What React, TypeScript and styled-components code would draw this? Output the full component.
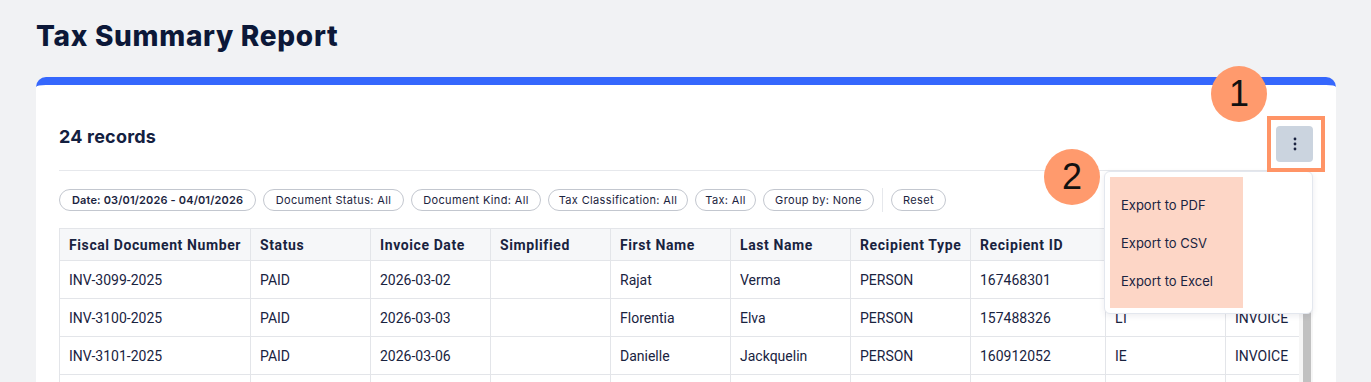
import * as React from "react"
import styled, { createGlobalStyle } from "styled-components"

const GlobalStyle = createGlobalStyle`
  body {
    margin: 0;
    background: #f1f2f4;
    font-family: Inter, "Noto Sans", sans-serif;
    color: #0e1a3d;
  }
`

const Page = styled.div`
  padding: 18px 35px 0 36px;
`

const Title = styled.h1`
  margin: 0 0 23px;
  font-size: 28px;
  line-height: 36px;
  font-weight: 800;
  letter-spacing: 0.7px;
  color: #0c1838;
`

const Card = styled.section`
  position: relative;
  background: #fff;
  border-top: 8px solid #3567fd;
  border-radius: 10px 10px 0 0;
  padding: 0 23px 20px;
`

const CardHeader = styled.div`
  display: flex;
  justify-content: space-between;
  align-items: flex-start;
  padding: 41px 0 8px;
  border-bottom: 1px solid #e6e8ec;
`

const Records = styled.h2`
  margin: 0;
  font-size: 18px;
  line-height: 22px;
  font-weight: 700;
  letter-spacing: 0.2px;
  color: #13203f;
`

const KebabButton = styled.button`
  display: flex;
  align-items: center;
  justify-content: center;
  width: 37px;
  height: 36px;
  padding: 0;
  border: none;
  border-radius: 4px;
  background: #cbd4df;
  color: #1a2340;
`

const Filters = styled.div`
  display: flex;
  align-items: center;
  gap: 7px;
  padding: 17px 0 16px;
`

const Chip = styled.button<{ $strong?: boolean; $w: number }>`
  width: ${(p) => p.$w}px;
  height: 22px;
  padding: 0;
  border: 1px solid #c3c7cf;
  border-radius: 11px;
  background: #fff;
  font-family: Inter, "Noto Sans", sans-serif;
  font-size: 11px;
  font-weight: ${(p) => (p.$strong ? 600 : 400)};
  letter-spacing: ${(p) => (p.$strong ? 0.15 : 0.35)}px;
  color: #1b2440;
  white-space: nowrap;
  text-align: center;
`

const Divider = styled.span`
  width: 1px;
  height: 24px;
  margin: 0 1px;
  background: #e6e8ec;
`

const TableArea = styled.div`
  display: flex;
  height: 300px;
`

const TableViewport = styled.div`
  flex: 1;
  min-width: 0;
  overflow: hidden;
`

const ScrollTrack = styled.div`
  width: 14px;
  flex-shrink: 0;
  padding: 40px 2px 0 4px;
  box-sizing: border-box;
  background: #f6f6f6;
`

const ScrollThumb = styled.div`
  height: 200px;
  background: #c1c1c1;
`

const Table = styled.table<{ $w: number }>`
  width: ${(p) => p.$w}px;
  border-collapse: collapse;
  table-layout: fixed;
  font-family: Roboto, "Liberation Sans", sans-serif;
  font-size: 14px;
  color: #19233f;
`

const Th = styled.th`
  height: 31px;
  padding: 0 9px;
  text-align: left;
  font-weight: 700;
  letter-spacing: 0.6px;
  background: #f6f7f9;
  border: 1px solid #e3e5e9;
  white-space: nowrap;
  overflow: hidden;
`

const Td = styled.td`
  height: 37px;
  padding: 0 9px;
  border: 1px solid #e3e5e9;
  white-space: nowrap;
  overflow: hidden;
`

const Menu = styled.div`
  position: absolute;
  top: 86px;
  right: 23px;
  width: 197px;
  padding: 5px;
  background: #fff;
  border: 1px solid #e3e7ee;
  border-radius: 6px;
  box-shadow: 0 2px 6px rgba(20, 30, 60, 0.08);
  z-index: 3;
`

const MenuList = styled.ul`
  list-style: none;
  margin: 0;
  width: 133px;
  padding: 9px 0 8px;
  background: #fdd6c6;
`

const MenuItem = styled.li`
  height: 38px;
  line-height: 38px;
  padding: 0 11px;
  font-size: 13px;
  color: #1a2340;
`

const Badge = styled.div<{ $top: number; $right: number }>`
  position: absolute;
  top: ${(p) => p.$top}px;
  right: ${(p) => p.$right}px;
  width: 56px;
  height: 56px;
  border-radius: 50%;
  background: #ff9a6d;
  display: flex;
  align-items: center;
  justify-content: center;
  font-family: "Liberation Sans", Arial, sans-serif;
  font-size: 36px;
  color: #111;
  z-index: 4;
`

const Highlight = styled.div`
  position: absolute;
  top: 31px;
  right: 11px;
  width: 50px;
  height: 48px;
  border: 4px solid #ff9466;
  z-index: 4;
  pointer-events: none;
`

const columns = [
  { label: "Fiscal Document Number", width: 191 },
  { label: "Status", width: 120 },
  { label: "Invoice Date", width: 120 },
  { label: "Simplified", width: 120 },
  { label: "First Name", width: 120 },
  { label: "Last Name", width: 120 },
  { label: "Recipient Type", width: 120 },
  { label: "Recipient ID", width: 135 },
  { label: "Country", width: 120 },
  { label: "Document Kind", width: 120 },
  { label: "Net Amount", width: 120 },
  { label: "Tax Amount", width: 120 },
  { label: "Total", width: 120 },
]

const tableWidth = columns.reduce((sum, c) => sum + c.width, 0)

const rows = [
  ["INV-3099-2025", "PAID", "2026-03-02", "", "Rajat", "Verma", "PERSON", "167468301", "IN", "INVOICE", "1,250.00", "262.50", "1,512.50"],
  ["INV-3100-2025", "PAID", "2026-03-03", "", "Florentia", "Elva", "PERSON", "157488326", "LT", "INVOICE", "980.00", "205.80", "1,185.80"],
  ["INV-3101-2025", "PAID", "2026-03-06", "", "Danielle", "Jackquelin", "PERSON", "160912052", "IE", "INVOICE", "640.00", "147.20", "787.20"],
  ["INV-3102-2025", "PAID", "2026-03-07", "", "Marco", "Bellini", "PERSON", "171203994", "IT", "INVOICE", "310.00", "68.20", "378.20"],
  ["INV-3103-2025", "PAID", "2026-03-09", "", "Hanna", "Kowalska", "PERSON", "148820471", "PL", "INVOICE", "2,100.00", "483.00", "2,583.00"],
  ["INV-3104-2025", "PAID", "2026-03-11", "", "Tomás", "Ortega", "PERSON", "152093318", "ES", "INVOICE", "455.00", "95.55", "550.55"],
  ["INV-3105-2025", "PAID", "2026-03-12", "", "Sofie", "Jansen", "PERSON", "163775120", "NL", "INVOICE", "720.00", "151.20", "871.20"],
  ["INV-3106-2025", "PAID", "2026-03-14", "", "Lukas", "Meyer", "PERSON", "159902846", "DE", "INVOICE", "1,080.00", "205.20", "1,285.20"],
]

const filters = [
  { label: "Document Status: All", width: 141 },
  { label: "Document Kind: All", width: 130 },
  { label: "Tax Classification: All", width: 140 },
  { label: "Tax: All", width: 61 },
  { label: "Group by: None", width: 111 },
]

const KebabIcon = () => (
  <svg width="4" height="14" viewBox="0 0 4 14" fill="currentColor">
    <circle cx="2" cy="2" r="1.4" />
    <circle cx="2" cy="7" r="1.4" />
    <circle cx="2" cy="12" r="1.4" />
  </svg>
)

const App = () => (
  <Page>
    <GlobalStyle />
    <Title>Tax Summary Report</Title>
    <Card>
      <CardHeader>
        <Records>24 records</Records>
        <KebabButton aria-label="More actions">
          <KebabIcon />
        </KebabButton>
      </CardHeader>
      <Filters>
        <Chip $strong $w={197}>
          Date: 03/01/2026 - 04/01/2026
        </Chip>
        {filters.map((f) => (
          <Chip key={f.label} $w={f.width}>
            {f.label}
          </Chip>
        ))}
        <Divider />
        <Chip $w={55}>Reset</Chip>
      </Filters>
      <TableArea>
        <TableViewport>
          <Table $w={tableWidth}>
            <colgroup>
              {columns.map((c) => (
                <col key={c.label} style={{ width: c.width }} />
              ))}
            </colgroup>
            <thead>
              <tr>
                {columns.map((c) => (
                  <Th key={c.label}>{c.label}</Th>
                ))}
              </tr>
            </thead>
            <tbody>
              {rows.map((r) => (
                <tr key={r[0]}>
                  {r.map((v, i) => (
                    <Td key={i}>{v}</Td>
                  ))}
                </tr>
              ))}
            </tbody>
          </Table>
        </TableViewport>
        <ScrollTrack>
          <ScrollThumb />
        </ScrollTrack>
      </TableArea>

      <Menu>
        <MenuList>
          <MenuItem>Export to PDF</MenuItem>
          <MenuItem>Export to CSV</MenuItem>
          <MenuItem>Export to Excel</MenuItem>
        </MenuList>
      </Menu>
      <Highlight />
      <Badge $top={-19} $right={69}>1</Badge>
      <Badge $top={64} $right={236}>2</Badge>
    </Card>
  </Page>
)

export default App
